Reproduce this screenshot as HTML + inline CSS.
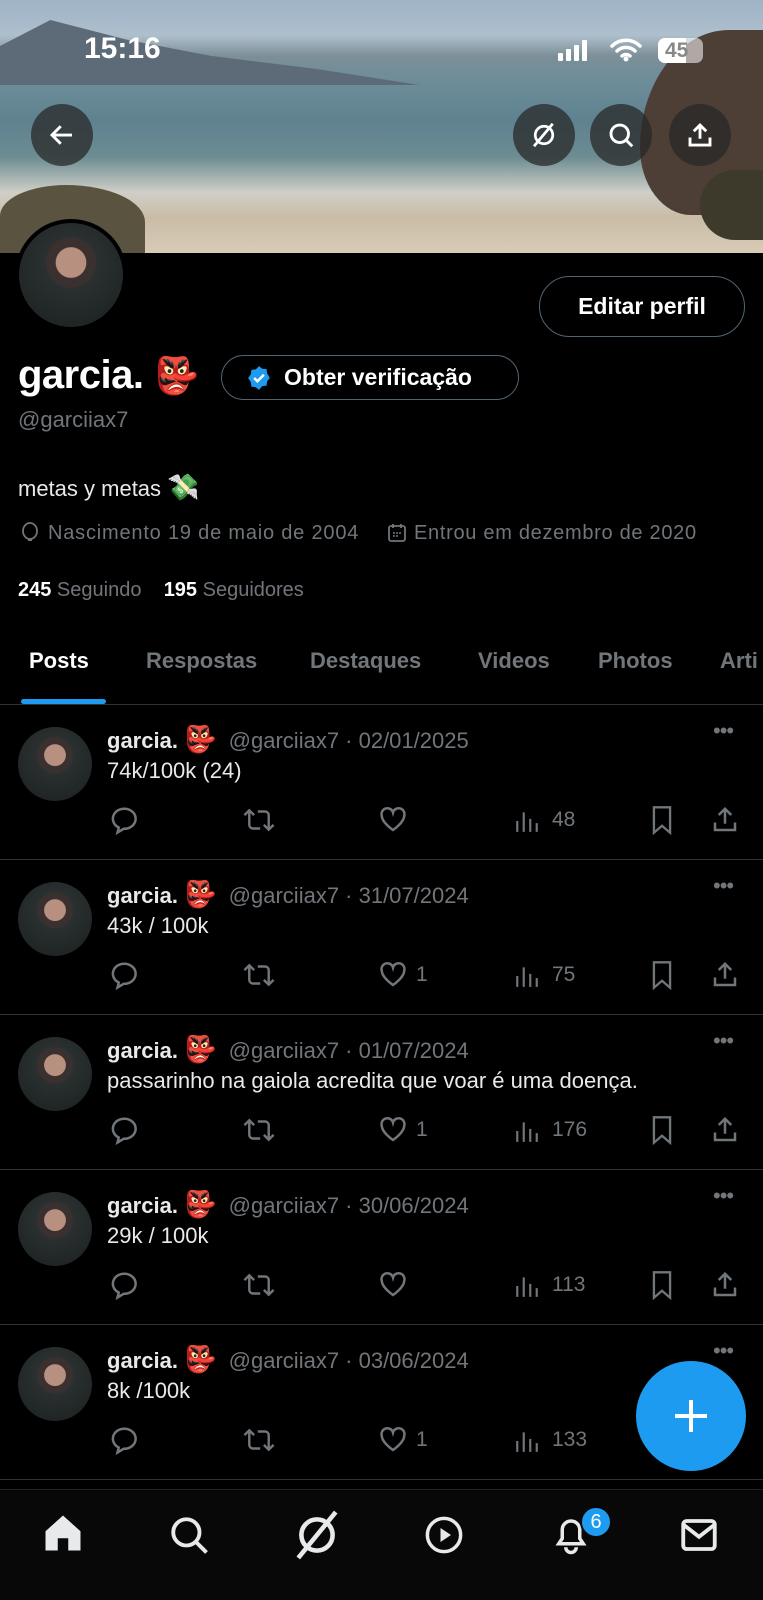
<!DOCTYPE html>
<html><head><meta charset="utf-8"><style>
*{margin:0;padding:0;box-sizing:border-box}
body{width:763px;height:1600px;background:#000;position:relative;overflow:hidden;font-family:"Liberation Sans",sans-serif;color:#e7e9ea}
.a{position:absolute;white-space:nowrap}
.g{color:#71767b}
.circ{position:absolute;width:62px;height:62px;border-radius:50%;background:rgba(40,40,40,.75);display:flex;align-items:center;justify-content:center}
.av{position:absolute;border-radius:50%;background:radial-gradient(circle at 50% 38%,#b89080 0 18%,#3a3030 19% 30%,#2a3030 31%,#1a2020)}
.ic{position:absolute}
.post-div{position:absolute;left:0;width:763px;height:1px;background:#2f3336}
</style></head><body>
<div class="a" style="left:0;top:0;width:763px;height:253px;background:linear-gradient(180deg,#9fb3c8 0,#aebfcc 14%,#7d8f98 22%,#6f8e9a 30%,#5f8290 48%,#6d8c92 62%,#cfcfc8 76%,#c9bca6 86%,#d8ccb6 100%);overflow:hidden">
 <div class="a" style="left:0;top:20px;width:420px;height:65px;background:#5d6b78;clip-path:polygon(0 40%,12% 0,30% 30%,50% 55%,75% 75%,100% 100%,0 100%)"></div>
 <div class="a" style="left:0;top:185px;width:145px;height:68px;background:#5a5340;border-radius:50% 60% 0 0"></div>
 <div class="a" style="left:640px;top:30px;width:140px;height:185px;background:#4e3f36;border-radius:70% 0 0 40%"></div>
 <div class="a" style="left:700px;top:170px;width:70px;height:70px;background:#3d3a2c;border-radius:50% 0 0 50%"></div>
</div>
<div class="a" style="left:84px;top:32px;font-size:30px;font-weight:bold;color:#fff">15:16</div>
<div class="a" style="left:558px;top:40px;display:flex;gap:3px;align-items:flex-end">
<div style="width:5px;height:8px;background:#fff;border-radius:1px"></div><div style="width:5px;height:12px;background:#fff;border-radius:1px"></div><div style="width:5px;height:16px;background:#fff;border-radius:1px"></div><div style="width:5px;height:21px;background:#fff;border-radius:1px"></div></div>
<svg class="ic" style="left:610px;top:38px" width="32" height="24" viewBox="0 0 32 24"><path d="M2 8a20 20 0 0 1 28 0M7 13a13 13 0 0 1 18 0M12 18a6 6 0 0 1 8 0" stroke="#fff" stroke-width="3.5" fill="none" stroke-linecap="round"/><circle cx="16" cy="21" r="2.5" fill="#fff"/></svg>
<div class="a" style="left:658px;top:38px;width:45px;height:25px;border-radius:7px;background:rgba(255,255,255,.55)"><div style="width:28px;height:25px;background:#fff;border-radius:7px 0 0 7px"></div><span style="position:absolute;left:7px;top:1px;font-size:21px;font-weight:bold;color:#888">45</span></div>
<div class="circ" style="left:31px;top:104px"><svg width="30" height="30" viewBox="0 0 24 24"><path d="M20 12H5M11 5l-7 7 7 7" stroke="#fff" stroke-width="2.3" fill="none"/></svg></div>
<div class="circ" style="left:513px;top:104px"><svg width="30" height="30" viewBox="0 0 24 24"><circle cx="12" cy="12" r="7" stroke="#fff" stroke-width="2.2" fill="none"/><path d="M19 3L4 21" stroke="#fff" stroke-width="2.2"/></svg></div>
<div class="circ" style="left:590px;top:104px"><svg width="30" height="30" viewBox="0 0 24 24"><circle cx="11" cy="11" r="7" stroke="#fff" stroke-width="2.3" fill="none"/><path d="M16 16l5 5" stroke="#fff" stroke-width="2.3"/></svg></div>
<div class="circ" style="left:669px;top:104px"><svg width="30" height="30" viewBox="0 0 24 24"><path d="M12 15V4M7 9l5-5 5 5M4 14v6h16v-6" stroke="#fff" stroke-width="2.3" fill="none"/></svg></div>
<div class="av" style="left:15px;top:219px;width:112px;height:112px;border:4px solid #000"></div>
<div class="a" style="left:539px;top:276px;width:206px;height:61px;border:1.5px solid #536471;border-radius:31px;font-size:23px;font-weight:bold;text-align:center;line-height:58px;color:#fff">Editar perfil</div>
<div class="a" style="left:18px;top:353px;font-size:40px;font-weight:bold;color:#fff;letter-spacing:-0.5px">garcia. <span style="font-size:36px">👺</span></div>
<div class="a" style="left:221px;top:355px;width:298px;height:45px;border:1.5px solid #536471;border-radius:23px;font-size:23px;font-weight:bold;line-height:42px;padding-left:62px;color:#fff">Obter verificação</div>
<svg class="ic" style="left:246px;top:365px" width="26" height="26" viewBox="0 0 24 24"><path d="M12 1l3 2.5 4 .2.5 4L22 12l-2.5 3-.5 4-4 .5L12 23l-3-2.5-4-.5-.5-4L2 12l2.5-3.5.5-4 4-.5z" fill="#1d9bf0"/><path d="M7.5 12l3 3 6-6" stroke="#fff" stroke-width="2.3" fill="none"/></svg>
<div class="a g" style="left:18px;top:407px;font-size:22px">@garciiax7</div>
<div class="a" style="left:18px;top:472px;font-size:22px">metas y metas <span style="font-size:26px">💸</span></div>
<svg class="ic" style="left:20px;top:522px" width="20" height="22" viewBox="0 0 20 22"><ellipse cx="10" cy="9" rx="7" ry="8" stroke="#71767b" stroke-width="1.8" fill="none"/><path d="M8 18h4" stroke="#71767b" stroke-width="2"/></svg>
<div class="a g" style="left:48px;top:522px;font-size:20px;letter-spacing:0.8px">Nascimento 19 de maio de 2004</div>
<svg class="ic" style="left:387px;top:523px" width="20" height="20" viewBox="0 0 20 20"><rect x="2" y="3" width="16" height="15" rx="2" stroke="#71767b" stroke-width="1.8" fill="none"/><path d="M6 1v4M14 1v4" stroke="#71767b" stroke-width="1.8"/><circle cx="7" cy="10" r="1" fill="#71767b"/><circle cx="10" cy="10" r="1" fill="#71767b"/><circle cx="13" cy="10" r="1" fill="#71767b"/><circle cx="7" cy="13" r="1" fill="#71767b"/><circle cx="10" cy="13" r="1" fill="#71767b"/></svg>
<div class="a g" style="left:414px;top:522px;font-size:20px;letter-spacing:0.7px">Entrou em dezembro de 2020</div>
<div class="a g" style="left:18px;top:579px;font-size:20px"><b style="color:#fff">245</b> Seguindo&nbsp;&nbsp;&nbsp; <b style="color:#fff">195</b> Seguidores</div>
<div class="a" style="left:29px;top:648px;font-size:22px;font-weight:bold;color:#fff">Posts</div>
<div class="a g" style="left:146px;top:648px;font-size:22px;font-weight:bold">Respostas</div>
<div class="a g" style="left:310px;top:648px;font-size:22px;font-weight:bold">Destaques</div>
<div class="a g" style="left:478px;top:648px;font-size:22px;font-weight:bold">Videos</div>
<div class="a g" style="left:598px;top:648px;font-size:22px;font-weight:bold">Photos</div>
<div class="a g" style="left:720px;top:648px;font-size:22px;font-weight:bold">Arti</div>
<div class="a" style="left:21px;top:699px;width:85px;height:5px;border-radius:3px;background:#1d9bf0"></div>
<div class="post-div" style="top:704px"></div>

<div id="posts"></div>
<script>
const P=[["02/01/2025","74k/100k (24)","","48"],["31/07/2024","43k / 100k","1","75"],["01/07/2024","passarinho na gaiola acredita que voar é uma doença.","1","176"],["30/06/2024","29k / 100k","","113"],["03/06/2024","8k /100k","1","133"]];
let h="";const s='stroke="#71767b" stroke-width="2" fill="none"';
P.forEach((p,i)=>{const t=704+i*155;
h+=`<div class="av" style="left:18px;top:${t+23}px;width:74px;height:74px"></div>
<div class="a" style="left:107px;top:${t+20}px;font-size:22px;color:#e7e9ea"><b>garcia.</b> <span style="font-size:26px">👺</span>&nbsp; <span class="g">@garciiax7 · ${p[0]}</span></div>
<div class="a g" style="left:713px;top:${t+14}px;font-size:22px;letter-spacing:-1px">•••</div>
<div class="a" style="left:107px;top:${t+54}px;font-size:22px;color:#e7e9ea">${p[1]}</div>
<svg class="ic" style="left:110px;top:${t+101}px" width="30" height="30" viewBox="0 0 24 24"><path d="M12 3a9 8 0 0 0-5 15l-1 4 5-3a9 8 0 1 0 1-16z" ${s}/></svg>
<svg class="ic" style="left:242px;top:${t+101}px" width="34" height="30" viewBox="0 0 28 24"><path d="M2 8l4-4 4 4M6 4v12a3 3 0 0 0 3 3h6M26 16l-4 4-4-4M22 20V8a3 3 0 0 0-3-3h-6" ${s}/></svg>
<svg class="ic" style="left:378px;top:${t+101}px" width="30" height="30" viewBox="0 0 24 24"><path d="M12 20S3 14 3 8.5A4.5 4.5 0 0 1 12 6a4.5 4.5 0 0 1 9 2.5C21 14 12 20 12 20z" ${s}/></svg>
${p[2]?`<div class="a g" style="left:416px;top:${t+104}px;font-size:21px">${p[2]}</div>`:""}
<svg class="ic" style="left:514px;top:${t+104}px" width="26" height="26" viewBox="0 0 24 24"><path d="M3 22V12M9 22V4M15 22V10M21 22V14" ${s} stroke-width="2.4"/></svg>
<div class="a g" style="left:552px;top:${t+104}px;font-size:21px">${p[3]}</div>
${i<4?`<svg class="ic" style="left:648px;top:${t+101}px" width="28" height="30" viewBox="0 0 24 26"><path d="M5 2h14v22l-7-6-7 6z" ${s}/></svg>
<svg class="ic" style="left:710px;top:${t+101}px" width="30" height="30" viewBox="0 0 24 24"><path d="M12 15V3M7 8l5-5 5 5M4 14v6h16v-6" ${s}/></svg>`:""}
<div class="post-div" style="top:${t+155}px"></div>`;});
document.getElementById("posts").innerHTML=h;
</script>
<div class="a" style="left:0;top:1489px;width:763px;height:111px;background:#080808;border-top:1px solid #222"></div>
<svg class="ic" style="left:42px;top:1512px" width="42" height="42" viewBox="0 0 24 24"><path d="M12 2L2 11v11h7v-7h6v7h7V11z" fill="#e7e9ea"/></svg>
<svg class="ic" style="left:168px;top:1514px" width="42" height="42" viewBox="0 0 24 24"><circle cx="10.5" cy="10.5" r="7.5" stroke="#e7e9ea" stroke-width="2.2" fill="none"/><path d="M16 16l6 6" stroke="#e7e9ea" stroke-width="2.2"/></svg>
<svg class="ic" style="left:292px;top:1510px" width="50" height="50" viewBox="0 0 24 24"><circle cx="12" cy="12" r="7.5" stroke="#e7e9ea" stroke-width="2.2" fill="none"/><path d="M21 1L3 23" stroke="#e7e9ea" stroke-width="2.2"/></svg>
<svg class="ic" style="left:423px;top:1514px" width="42" height="42" viewBox="0 0 24 24"><circle cx="12" cy="12" r="9.5" stroke="#e7e9ea" stroke-width="2" fill="none"/><path d="M10 8l6 4-6 4z" fill="#e7e9ea"/></svg>
<svg class="ic" style="left:550px;top:1514px" width="42" height="42" viewBox="0 0 24 24"><path d="M5 17h14l-2-3V9a5 5 0 0 0-10 0v5zM9 19a3 3 0 0 0 6 0" stroke="#e7e9ea" stroke-width="2" fill="none"/></svg>
<div class="a" style="left:580px;top:1506px;width:32px;height:32px;border-radius:50%;background:#1d9bf0;border:2px solid #080808;color:#fff;font-size:20px;text-align:center;line-height:28px">6</div>
<svg class="ic" style="left:678px;top:1514px" width="42" height="42" viewBox="0 0 24 24"><rect x="3" y="4" width="18" height="16" rx="2" stroke="#e7e9ea" stroke-width="2.2" fill="none"/><path d="M3 6l9 7 9-7" stroke="#e7e9ea" stroke-width="2.2" fill="none"/></svg>
<div class="a" style="left:636px;top:1361px;width:110px;height:110px;border-radius:50%;background:#1d9bf0"></div>
<svg class="ic" style="left:671px;top:1396px" width="40" height="40" viewBox="0 0 40 40"><path d="M20 4v32M4 20h32" stroke="#fff" stroke-width="4"/></svg>
</body></html>
